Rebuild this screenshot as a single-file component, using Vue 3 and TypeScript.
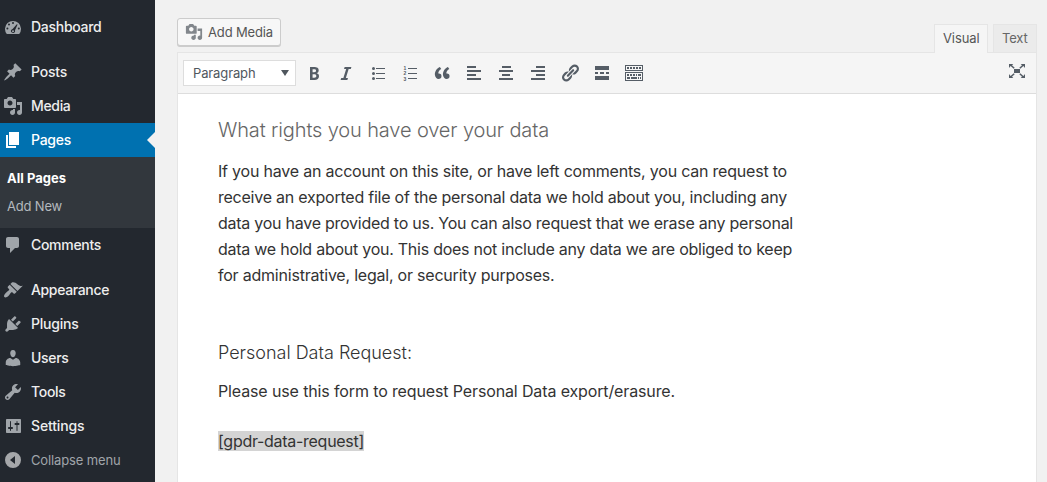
<script setup lang="ts">
import type { Directive } from 'vue'

interface MenuItem {
  label: string
  icon: string
  current?: boolean
  gap?: boolean
  width: number
}

const icons: Record<string, string> = {
  dashboard:
    'M3.8 17h12.4A8 8 0 1 0 3.8 17zM10 5a1 1 0 1 1 0 2 1 1 0 0 1 0-2zM6 6.6a1 1 0 1 1 0 2 1 1 0 0 1 0-2zM14.6 7.6l-2.6 5.6c.5 1.6-.6 2.8-2 2.8s-2.5-1.2-2-2.6c.3-.8.9-1.2 1.6-1.4l4.2-4.8zM4.4 10.6a1 1 0 1 1 0 2 1 1 0 0 1 0-2zM15.8 10.6a1 1 0 1 1 0 2 1 1 0 0 1 0-2zM10 13.2a1 1 0 1 0 0 2 1 1 0 0 0 0-2z',
  post: 'M10.44 3.02l1.82-1.82 6.36 6.35-1.83 1.82c-1.05-.68-2.48-.57-3.41.36l-.75.75c-.92.93-1.04 2.35-.35 3.41l-1.83 1.82-2.41-2.41-2.8 2.79c-.42.42-3.38 2.71-3.8 2.29s1.86-3.39 2.28-3.81l2.79-2.79L4.1 9.36l1.83-1.82c1.05.69 2.48.57 3.4-.36l.75-.75c.93-.92 1.05-2.35.36-3.41z',
  media:
    'M13 11V4c0-.55-.45-1-1-1h-1.67L9 1H5L3.67 3H2c-.55 0-1 .45-1 1v7c0 .55.45 1 1 1h10c.55 0 1-.45 1-1zM7 4.5c1.38 0 2.5 1.12 2.5 2.5S8.38 9.5 7 9.5 4.5 8.38 4.5 7 5.62 4.5 7 4.5zM14 6h5v10.5c0 1.38-1.12 2.5-2.5 2.5S14 17.88 14 16.5s1.12-2.5 2.5-2.5c.17 0 .34.02.5.05V9h-3V6zm-4 8.05V13h2v3.5c0 1.38-1.12 2.5-2.5 2.5S7 17.88 7 16.5 8.12 14 9.5 14c.17 0 .34.02.5.05z',
  page: 'M6 15V2h10v13H6zm-1 1h8v2H3V5h2v11z',
  comment: 'M5 2h9c1.1 0 2 .9 2 2v7c0 1.1-.9 2-2 2h-2l-5 5v-5H5c-1.1 0-2-.9-2-2V4c0-1.1.9-2 2-2z',
  appearance:
    'M14.48 11.06L7.41 3.99l1.5-1.5c.5-.56 2.3-.47 3.51.32 1.21.8 1.43 1.28 2.91 2.1 1.18.64 2.45 1.26 4.45.85zm-.71.71L6.7 4.7 4.93 6.47c-.39.39-.39 1.02 0 1.41l1.06 1.06c.39.39.39 1.03 0 1.42-.6.6-1.43 1.11-2.21 1.69-.35.26-.7.53-1.01.84C1.43 14.23.4 16.08 1.4 17.07c.99 1 2.84-.03 4.18-1.36.31-.31.58-.66.85-1.02.57-.78 1.08-1.61 1.69-2.21.39-.39 1.02-.39 1.41 0l1.06 1.06c.39.39 1.02.39 1.41 0z',
  plugin:
    'M13.11 4.36L9.87 7.6 8 5.73l3.24-3.24c.35-.34 1.05-.2 1.56.32.52.51.66 1.21.31 1.55zm-8 1.77l.91-1.12 9.01 9.01-1.19.84c-.71.71-2.63 1.16-3.82 1.16H6.14L4.9 17.26c-.59.59-1.54.59-2.12 0-.59-.58-.59-1.53 0-2.12l1.24-1.24v-3.88c0-1.13.4-3.19 1.09-3.89zm7.26 3.97l3.24-3.24c.34-.35 1.04-.21 1.55.31.52.51.66 1.21.31 1.55l-3.24 3.25z',
  user: 'M10 9.25c-2.27 0-2.73-3.44-2.73-3.44C7 4.02 7.82 2 9.97 2c2.16 0 2.98 2.02 2.71 3.81 0 0-.41 3.44-2.68 3.44zm0 2.57L12.72 10c2.39 0 4.52 2.33 4.52 4.53v2.49s-3.65 1.13-7.24 1.13c-3.65 0-7.24-1.13-7.24-1.13v-2.49c0-2.25 1.94-4.48 4.47-4.48z',
  tool: 'M16.68 9.77c-1.34 1.34-3.3 1.67-4.95.99l-5.41 6.52c-.99.99-2.59.99-3.58 0s-.99-2.59 0-3.57l6.52-5.42c-.68-1.65-.35-3.61.99-4.95 1.28-1.28 3.12-1.62 4.72-1.06l-2.89 2.89 2.82 2.82 2.86-2.87c.53 1.58.18 3.39-1.08 4.65zM3.81 16.21c.4.39 1.04.39 1.43 0 .4-.4.4-1.04 0-1.43-.39-.4-1.03-.4-1.43 0-.39.39-.39 1.03 0 1.43z',
  settings:
    'M18 16V4c0-.55-.45-1-1-1H4c-.55 0-1 .45-1 1v12c0 .55.45 1 1 1h13c.55 0 1-.45 1-1zM8 11h1c.55 0 1 .45 1 1s-.45 1-1 1H8v1.5c0 .28-.22.5-.5.5s-.5-.22-.5-.5V13H6c-.55 0-1-.45-1-1s.45-1 1-1h1V5.5c0-.28.22-.5.5-.5s.5.22.5.5V11zm5.500-2h-1c-.55 0-1-.45-1-1s.45-1 1-1h1V5.5c0-.28.22-.5.5-.5s.5.22.5.5V7h1c.55 0 1 .45 1 1s-.45 1-1 1h-1v5.5c0 .28-.22.5-.5.5s-.5-.22-.5-.5V9z',
  collapse: 'M10 2a8 8 0 1 0 0 16 8 8 0 0 0 0-16zM12 6v8l-5-4z',
  bold: 'M6 4v13h4.54c1.37 0 2.46-.33 3.26-1 .8-.66 1.2-1.58 1.2-2.77 0-.84-.17-1.51-.51-2.01s-.9-.85-1.67-1.03v-.09c.57-.1 1.02-.4 1.36-.9s.51-1.13.51-1.91c0-1.14-.39-1.98-1.17-2.5C12.75 4.26 11.5 4 9.78 4H6zm2.57 5.15V6.26h1.36c.73 0 1.27.11 1.61.32.34.22.51.58.51 1.07 0 .54-.16.92-.47 1.15s-.82.35-1.51.35h-1.5zm0 2.19h1.6c1.44 0 2.16.53 2.16 1.61 0 .6-.17 1.05-.51 1.34s-.86.43-1.57.43H8.57v-3.38z',
  italic: 'M14.78 6h-2.13l-2.8 9h2.12l-.62 2H4.6l.62-2h2.14l2.8-9H8.03l.62-2h6.75z',
  bullets:
    'M5.5 4a1.5 1.5 0 1 1 0 3 1.5 1.5 0 0 1 0-3zM8 5h9v1H8zM5.5 9a1.5 1.5 0 1 1 0 3 1.5 1.5 0 0 1 0-3zM8 10h9v1H8zM5.5 14a1.5 1.5 0 1 1 0 3 1.5 1.5 0 0 1 0-3zM8 15h9v1H8z',
  numbers: 'M8 5h9v1H8zM8 10h9v1H8zM8 15h9v1H8z',
  quote:
    'M9.49 13.22c0-.74-.2-1.38-.61-1.9-.62-.78-1.83-.88-2.53-.72-.29-1.65 1.11-3.75 2.92-4.65L7.88 4c-2.73 1.3-5.42 4.28-4.96 8.05C3.21 14.43 4.59 16 6.54 16c.85 0 1.56-.25 2.12-.75s.83-1.18.83-2.03zm8.05 0c0-.74-.2-1.38-.61-1.9-.63-.78-1.83-.88-2.53-.72-.29-1.65 1.11-3.75 2.92-4.65L15.93 4c-2.73 1.3-5.41 4.28-4.95 8.05.29 2.38 1.66 3.95 3.61 3.95.85 0 1.56-.25 2.12-.75s.83-1.18.83-2.03z',
  left: 'M3 3h9v2H3zM3 7h14v2H3zM3 11h9v2H3zM3 15h14v2H3z',
  center: 'M6 3h9v2H6zM3 7h14v2H3zM6 11h8v2H6zM3 15h14v2H3z',
  right: 'M8 3h9v2H8zM3 7h14v2H3zM8 11h9v2H8zM3 15h14v2H3z',
  link: 'M17.74 2.76c1.68 1.69 1.68 4.41 0 6.1l-1.53 1.52c-1.12 1.12-2.7 1.47-4.14 1.09l2.62-2.61.76-.77.76-.76c.84-.84.84-2.2 0-3.04-.84-.85-2.2-.85-3.04 0l-.77.76-3.38 3.38c-.37-1.44-.02-3.02 1.1-4.14l1.52-1.53c1.69-1.68 4.42-1.68 6.1 0zM8.59 13.43l5.34-5.34c.42-.42.42-1.1 0-1.52-.44-.43-1.13-.39-1.53 0l-5.33 5.34c-.42.42-.42 1.1 0 1.52.44.43 1.13.39 1.52 0zm-.76 2.29l4.14-4.15c.38 1.44.03 3.02-1.09 4.14l-1.52 1.53c-1.69 1.68-4.41 1.68-6.1 0-1.68-1.68-1.68-4.42 0-6.1l1.53-1.52c1.12-1.12 2.7-1.47 4.14-1.1l-4.14 4.15c-.85.84-.85 2.2 0 3.05.84.84 2.2.84 3.04 0z',
  more: 'M3 3h14v4H3zM3 9h3v2H3zM8 9h4v2H8zM14 9h3v2h-3zM3 13h14v4H3z',
  kitchen:
    'M1 2h18v6H1zM2 3v4h16V3zM3 4h2v2H3zM6 4h2v2H6zM9 4h2v2H9zM12 4h2v2h-2zM15 4h2v2h-2zM1 9h18v9H1zM2 10v7h16v-7zM3 11h2v2H3zM6 11h2v2H6zM9 11h2v2H9zM12 11h1v2h-1zM14 11h3v2h-3zM3 14h3v2H3zM7 14h6v2H7zM14 14h1v2h-1zM16 14h1v2h-1z',
  fullscreen:
    'M7 8h6v4H7zM2 3h4.3L5 4.3l2.7 2.4-1 1L3.6 5 2 7zM18 3h-4.3L15 4.3l-2.7 2.4 1 1L16.4 5 18 7zM2 17h4.3L5 15.7l2.7-2.4-1-1L3.6 15 2 13zM18 17h-4.3L15 15.7l-2.7-2.4 1-1 3.1 2.7L18 13z',
}

const menu: MenuItem[] = [
  { label: 'Dashboard', icon: 'dashboard', width: 70.5 },
  { label: 'Posts', icon: 'post', gap: true, width: 36 },
  { label: 'Media', icon: 'media', width: 39.5 },
  { label: 'Pages', icon: 'page', current: true, width: 40 },
  { label: 'Comments', icon: 'comment', width: 70 },
  { label: 'Appearance', icon: 'appearance', gap: true, width: 78 },
  { label: 'Plugins', icon: 'plugin', width: 47.5 },
  { label: 'Users', icon: 'user', width: 37.5 },
  { label: 'Tools', icon: 'tool', width: 34.5 },
  { label: 'Settings', icon: 'settings', width: 53.5 },
]

const tools = ['bold', 'italic', 'bullets', 'numbers', 'quote', 'left', 'center', 'right', 'link', 'more', 'kitchen']

const paragraph = [
  { text: 'If you have an account on this site, or have left comments, you can request to', width: 569 },
  { text: 'receive an exported file of the personal data we hold about you, including any', width: 569 },
  { text: 'data you have provided to us. You can also request that we erase any personal', width: 575 },
  { text: 'data we hold about you. This does not include any data we are obliged to keep', width: 574 },
  { text: 'for administrative, legal, or security purposes.', width: 336.5 },
]

// Tracks a line of text so that it spans the given number of pixels.
const vSpan: Directive<HTMLElement, number> = {
  mounted(el, binding) {
    const natural = el.getBoundingClientRect().width
    const count = (el.textContent ?? '').length
    el.style.letterSpacing = `${(binding.value - natural) / count}px`
  },
}
</script>

<template>
  <div class="admin">
    <nav class="sidebar">
      <template v-for="item in menu" :key="item.label">
        <a class="item" :class="{ current: item.current, gap: item.gap }">
          <svg class="icon" viewBox="0 0 20 20"><path :d="icons[item.icon]" fill-rule="evenodd" /></svg>
          <span v-span="item.width" class="label">{{ item.label }}</span>
        </a>
        <div v-if="item.current" class="submenu">
          <a class="sub active"><span v-span="59">All Pages</span></a>
          <a class="sub"><span v-span="55">Add New</span></a>
        </div>
      </template>
      <a class="item collapse">
        <svg class="icon" viewBox="0 0 20 20"><path :d="icons.collapse" fill-rule="evenodd" /></svg>
        <span v-span="89.5" class="label">Collapse menu</span>
      </a>
    </nav>

    <main class="main">
      <div class="top">
        <button class="add-media">
          <svg class="icon small" viewBox="0 0 20 20"><path :d="icons.media" fill-rule="evenodd" /></svg>
          <span v-span="65">Add Media</span>
        </button>
        <div class="tabs">
          <div class="tab selected"><span v-span="36.5">Visual</span></div>
          <div class="tab"><span v-span="25.5">Text</span></div>
        </div>
      </div>

      <section class="editor">
        <div class="toolbar">
          <div class="format">
            <span v-span="62.5">Paragraph</span>
            <i class="caret"></i>
          </div>
          <div class="tools">
            <svg v-for="tool in tools" :key="tool" class="icon" viewBox="0 0 20 20">
              <path :d="icons[tool]" fill-rule="evenodd" />
              <g v-if="tool === 'numbers'" class="digits">
                <text x="3.6" y="6.8">1</text>
                <text x="3.6" y="12.4">2</text>
                <text x="3.6" y="18">3</text>
              </g>
            </svg>
          </div>
          <svg class="icon fullscreen" viewBox="0 0 20 20"><path :d="icons.fullscreen" /></svg>
        </div>

        <div class="content">
          <h2><span v-span="331">What rights you have over your data</span></h2>
          <p>
            <span v-for="line in paragraph" :key="line.text" class="line"><span v-span="line.width">{{ line.text }}</span></span>
          </p>
          <h3><span v-span="194">Personal Data Request:</span></h3>
          <p><span v-span="457">Please use this form to request Personal Data export/erasure.</span></p>
          <p class="shortcode"><mark v-span="146">[gpdr-data-request]</mark></p>
        </div>
      </section>
    </main>
  </div>
</template>

<style>
body {
  overflow: hidden;
}
</style>

<style scoped>
.admin {
  display: flex;
  width: 1047px;
  height: 482px;
  overflow: hidden;
  background: #f1f1f1;
  font-family: Inter, Roboto, sans-serif;
  font-size: 13px;
}
span,
mark {
  white-space: nowrap;
}
.icon {
  display: block;
  flex: none;
  width: 20px;
  height: 20px;
  fill: currentColor;
}
.sidebar {
  flex: none;
  width: 155px;
  padding-top: 10px;
  box-sizing: border-box;
  background: #23282f;
}
.item {
  position: relative;
  display: flex;
  align-items: center;
  gap: 8px;
  height: 34px;
  padding-left: 3px;
  color: #a0a5aa;
}
.item.gap {
  margin-top: 11px;
}
.label {
  padding-bottom: 2px;
  color: #eee;
  font-size: 14px;
  font-weight: 550;
}
.item.current {
  background: #0071b0;
  color: #fff;
}
.item.current .label {
  color: #fff;
}
.item.current::after {
  content: '';
  position: absolute;
  right: 0;
  top: 9px;
  border: 8px solid transparent;
  border-left: 0;
  border-right-color: #f1f1f1;
}
.submenu {
  height: 71px;
  padding: 7px 0 8px 7px;
  box-sizing: border-box;
  background: #32373d;
}
.sub {
  display: block;
  height: 28px;
  line-height: 28px;
  color: #b4b9be;
}
.sub.active {
  color: #fff;
  font-weight: 650;
}
.item.collapse {
  color: #a5a7aa;
}
.collapse .label {
  padding-bottom: 0;
  color: #a0a5aa;
  font-size: 13px;
  font-weight: 400;
}
.main {
  width: 860px;
  padding: 18px 10px 0 22px;
}
.top {
  display: flex;
  justify-content: space-between;
  height: 34px;
}
.add-media {
  display: flex;
  align-items: center;
  gap: 5px;
  width: 104px;
  height: 28px;
  padding: 0 0 0 7px;
  box-sizing: border-box;
  border: 1px solid #ccc;
  border-radius: 3px;
  background: #f7f7f7;
  box-shadow: 0 1px 0 #ccc;
  color: #555;
  font: 13px Inter, sans-serif;
}
.small {
  width: 18px;
  height: 18px;
  color: #82878c;
}
.tabs {
  display: flex;
  gap: 5px;
  padding-top: 6px;
}
.tab {
  box-sizing: border-box;
  width: 44px;
  height: 28px;
  padding-left: 8px;
  border: 1px solid #e5e5e5;
  border-bottom: 0;
  background: #ebebeb;
  color: #666;
  line-height: 27px;
}
.tab.selected {
  position: relative;
  width: 54px;
  height: 29px;
  background: #f5f5f5;
  color: #555;
}
.editor {
  box-sizing: border-box;
  width: 860px;
  height: 440px;
  border: 1px solid #e5e5e5;
  background: #fff;
}
.toolbar {
  display: flex;
  align-items: center;
  height: 41px;
  padding: 0 9px 0 5px;
  box-sizing: border-box;
  border-bottom: 1px solid #ddd;
  background: #f5f5f5;
}
.format {
  display: flex;
  align-items: center;
  justify-content: space-between;
  width: 113px;
  height: 26px;
  padding: 0 6px 0 9px;
  box-sizing: border-box;
  border: 1px solid #ddd;
  background: #fff;
  color: #50575e;
}
.caret {
  border: 4px solid transparent;
  border-top: 6px solid #50575e;
  border-bottom: 0;
}
.tools {
  display: flex;
  gap: 12px;
  margin-left: 8px;
  color: #555d66;
}
.digits {
  font: 700 5px 'Liberation Sans', sans-serif;
}
.fullscreen {
  margin: 0 0 4px auto;
  color: #555d66;
}
.content {
  padding: 22px 40px 0;
  color: #333;
  font-size: 16px;
}
.content h2 {
  margin: 0;
  height: 42px;
  color: #666;
  font-size: 20px;
  font-weight: 270;
  line-height: 28px;
}
.content p {
  margin: 0;
  font-weight: 370;
  line-height: 26px;
}
.line {
  display: block;
}
.content h3 {
  margin: 51px 0 0;
  height: 39px;
  font-size: 18px;
  font-weight: 300;
  line-height: 28px;
}
.content .shortcode {
  margin-top: 24px;
}
mark {
  background: #d4d4d4;
  color: inherit;
}
</style>
